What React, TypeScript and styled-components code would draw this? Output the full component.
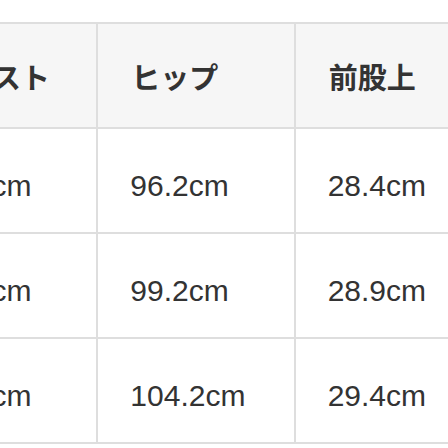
import React from 'react'
import styled, { createGlobalStyle } from 'styled-components'

const GlobalStyle = createGlobalStyle`
  html, body {
    margin: 0;
    padding: 0;
    background: #ffffff;
  }
  body {
    width: 448px;
    height: 448px;
    overflow: hidden;
    font-family: "Liberation Sans", "Noto Sans CJK JP", sans-serif;
  }
`

const Viewport = styled.div`
  width: 448px;
  height: 448px;
  overflow: hidden;
  padding-top: 22px;
  box-sizing: border-box;
`

const SizeTable = styled.table`
  border-collapse: collapse;
  table-layout: fixed;
  margin-left: -101px;
  width: 594px;
`

const HeadCell = styled.th`
  height: 105px;
  padding: 0 0 0 33px;
  border: 2px solid #dedede;
  background: #f6f6f6;
  color: #333333;
  font-family: "Noto Sans CJK JP", sans-serif;
  font-size: 29px;
  font-weight: 700;
  text-align: left;
  vertical-align: middle;
  box-sizing: border-box;
  white-space: nowrap;
`

const ValueCell = styled.td`
  height: 105px;
  padding: 10px 0 0 32px;
  border: 2px solid #dedede;
  color: #333333;
  font-family: "Liberation Sans", Arial, sans-serif;
  font-size: 30px;
  text-align: left;
  vertical-align: middle;
  box-sizing: border-box;
  white-space: nowrap;
`

const columns = ['ウエスト', 'ヒップ', '前股上']

const rows = [
  ['72.4cm', '96.2cm', '28.4cm'],
  ['75.4cm', '99.2cm', '28.9cm'],
  ['80.4cm', '104.2cm', '29.4cm'],
]

export default function App() {
  return (
    <>
      <GlobalStyle />
      <Viewport>
        <SizeTable>
          <thead>
            <tr>
              {columns.map((c) => (
                <HeadCell key={c}>{c}</HeadCell>
              ))}
            </tr>
          </thead>
          <tbody>
            {rows.map((r, i) => (
              <tr key={i}>
                {r.map((v, j) => (
                  <ValueCell key={j}>{v}</ValueCell>
                ))}
              </tr>
            ))}
          </tbody>
        </SizeTable>
      </Viewport>
    </>
  )
}
